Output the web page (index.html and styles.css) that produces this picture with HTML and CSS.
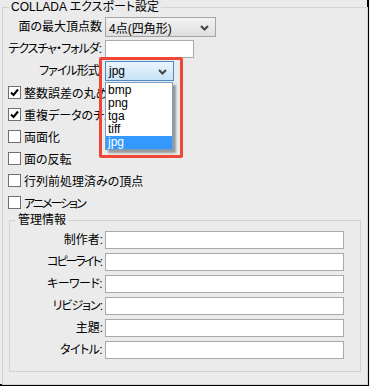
FILE: index.html
```html
<!DOCTYPE html>
<html>
    <head>
        <meta charset="utf-8">
        <link rel="stylesheet" href="styles.css">
    </head>
    <body>
        <div class="window">

            <fieldset class="group mainGroup">
                <legend>COLLADA エクスポート設定</legend>

                <div class="formGrid">
                    <span class="lbl">面の最大頂点数</span>
                    <div class="combo comboWide">
                        <span>4点(四角形)</span>
                        <svg class="arrow" width="9" height="6" viewBox="0 0 9 6"><path d="M1 1 L4.5 4.5 L8 1" fill="none" stroke="#444" stroke-width="2"/></svg>
                    </div>

                    <span class="lbl tight1">テクスチャ・フォルダ:</span>
                    <div class="field fieldShort"></div>

                    <span class="lbl tight1">ファイル形式:</span>
                    <div class="combo comboOpen">
                        <span>jpg</span>
                        <svg class="arrow" width="9" height="6" viewBox="0 0 9 6"><path d="M1 1 L4.5 4.5 L8 1" fill="none" stroke="#444" stroke-width="2"/></svg>
                        <ul class="dropList">
                            <li>bmp</li>
                            <li>png</li>
                            <li>tga</li>
                            <li>tiff</li>
                            <li class="picked">jpg</li>
                        </ul>
                    </div>
                </div>

                <div class="checkList">
                    <div class="checkRow"><span class="box"><svg width="11" height="11" viewBox="0 0 11 11"><path d="M2 5.5 L4.5 8 L9 2.5" fill="none" stroke="#000" stroke-width="2"/></svg></span>整数誤差の丸め</div>
                    <div class="checkRow"><span class="box"><svg width="11" height="11" viewBox="0 0 11 11"><path d="M2 5.5 L4.5 8 L9 2.5" fill="none" stroke="#000" stroke-width="2"/></svg></span>重複データのチェック</div>
                    <div class="checkRow"><span class="box"></span>両面化</div>
                    <div class="checkRow"><span class="box"></span>面の反転</div>
                    <div class="checkRow"><span class="box"></span>行列前処理済みの頂点</div>
                    <div class="checkRow"><span class="box"></span><span class="tight2">アニメーション</span></div>
                </div>

                <fieldset class="group infoGroup">
                    <legend>管理情報</legend>
                    <div class="infoGrid">
                        <span class="lbl">制作者:</span><div class="field"></div>
                        <span class="lbl tight2">コピーライト:</span><div class="field"></div>
                        <span class="lbl tightHalf">キーワード:</span><div class="field"></div>
                        <span class="lbl tight1">リビジョン:</span><div class="field"></div>
                        <span class="lbl">主題:</span><div class="field"></div>
                        <span class="lbl tightHalf">タイトル:</span><div class="field"></div>
                    </div>
                </fieldset>
            </fieldset>

            <!-- callout around the file format drop down -->
            <div class="callout"></div>
        </div>
    </body>
</html>
```

FILE: styles.css
```css
html, body {
    margin: 0;
    padding: 0;
}

body {
    width: 370px;
    height: 386px;
    background: #ebebeb;
    font-family: "Liberation Sans", "Noto Sans CJK JP", sans-serif;
    font-size: 12px;
    color: #000;
    font-feature-settings: "palt";
}

.window {
    position: relative;
    box-sizing: border-box;
    width: 370px;
    height: 386px;
    padding-left: 2px;
    border-left: 1px solid #555;
    border-right: 2px solid #000;
    border-bottom: 2px solid #000;
    margin-left: -1px;
}

.group {
    margin: 0;
    padding: 0;
    border: 1px solid #d3d3d3;
    box-sizing: border-box;
    min-inline-size: 0;
}

.group legend {
    padding: 0 2px;
    line-height: 14px;
    font-size: 12px;
}

.mainGroup {
    width: 366px;
    height: 385px;
    padding-top: 3px;
}

.mainGroup > legend {
    margin-left: 6px;
}

.formGrid {
    display: grid;
    grid-template-columns: 99px auto;
    column-gap: 3px;
    row-gap: 3px;
    align-items: center;
    justify-items: start;
}

.lbl {
    justify-self: end;
    white-space: nowrap;
    line-height: 14px;
}

/* katakana in the original UI font are narrower */
.tightHalf {
    letter-spacing: -0.6px;
}

.tight1 {
    letter-spacing: -1px;
}

.tight2 {
    letter-spacing: -2px;
}

.lbl.tightHalf {
    padding-right: 1px;
}

.lbl.tight1 {
    padding-right: 1px;
}

.lbl.tight2 {
    padding-right: 2px;
}

.combo {
    position: relative;
    box-sizing: border-box;
    height: 20px;
    border: 1px solid #a5a5a5;
    background: linear-gradient(#f3f3f3, #dedede);
    display: flex;
    align-items: center;
    padding-left: 3px;
}

.combo .arrow {
    position: absolute;
    right: 6px;
    top: 7px;
}

.comboWide {
    width: 111px;
}

.comboOpen {
    width: 69px;
    border-color: #4a8bc7;
    background: linear-gradient(#eaf5fc, #c6e3f7);
}

.field {
    box-sizing: border-box;
    height: 18px;
    border: 1px solid #a9a9a9;
    background: #fff;
}

.fieldShort {
    width: 89px;
}

.dropList {
    position: absolute;
    left: -1px;
    top: 20px;
    z-index: 2;
    box-sizing: border-box;
    width: 68px;
    margin: 0;
    padding: 1px 0 0;
    list-style: none;
    background: #fff;
    border: 1px solid #7a9cc0;
    box-shadow: 3px 3px 2px rgba(0, 0, 0, 0.35);
}

.dropList li {
    height: 13px;
    line-height: 13px;
    padding-left: 2px;
}

.dropList .picked {
    background: #3399ff;
    color: #fff;
}

.checkList {
    padding-left: 5px;
}

.checkRow {
    height: 22px;
    display: flex;
    align-items: center;
    gap: 3px;
    white-space: nowrap;
}

.box {
    box-sizing: border-box;
    width: 13px;
    height: 13px;
    border: 1px solid #6f6f6f;
    background: #fff;
    display: flex;
    align-items: center;
    justify-content: center;
}

.infoGroup {
    width: 352px;
    height: 159px;
    margin: 0 0 0 6px;
    padding-top: 4px;
}

.infoGroup > legend {
    margin-left: 6px;
}

.infoGrid {
    display: grid;
    grid-template-columns: 93px 239px;
    column-gap: 2px;
    row-gap: 4px;
    align-items: center;
}

.callout {
    position: absolute;
    left: 99px;
    top: 57px;
    width: 84px;
    height: 101px;
    box-sizing: border-box;
    border: 3px solid #f04638;
    border-radius: 2px;
    z-index: 3;
}
```
